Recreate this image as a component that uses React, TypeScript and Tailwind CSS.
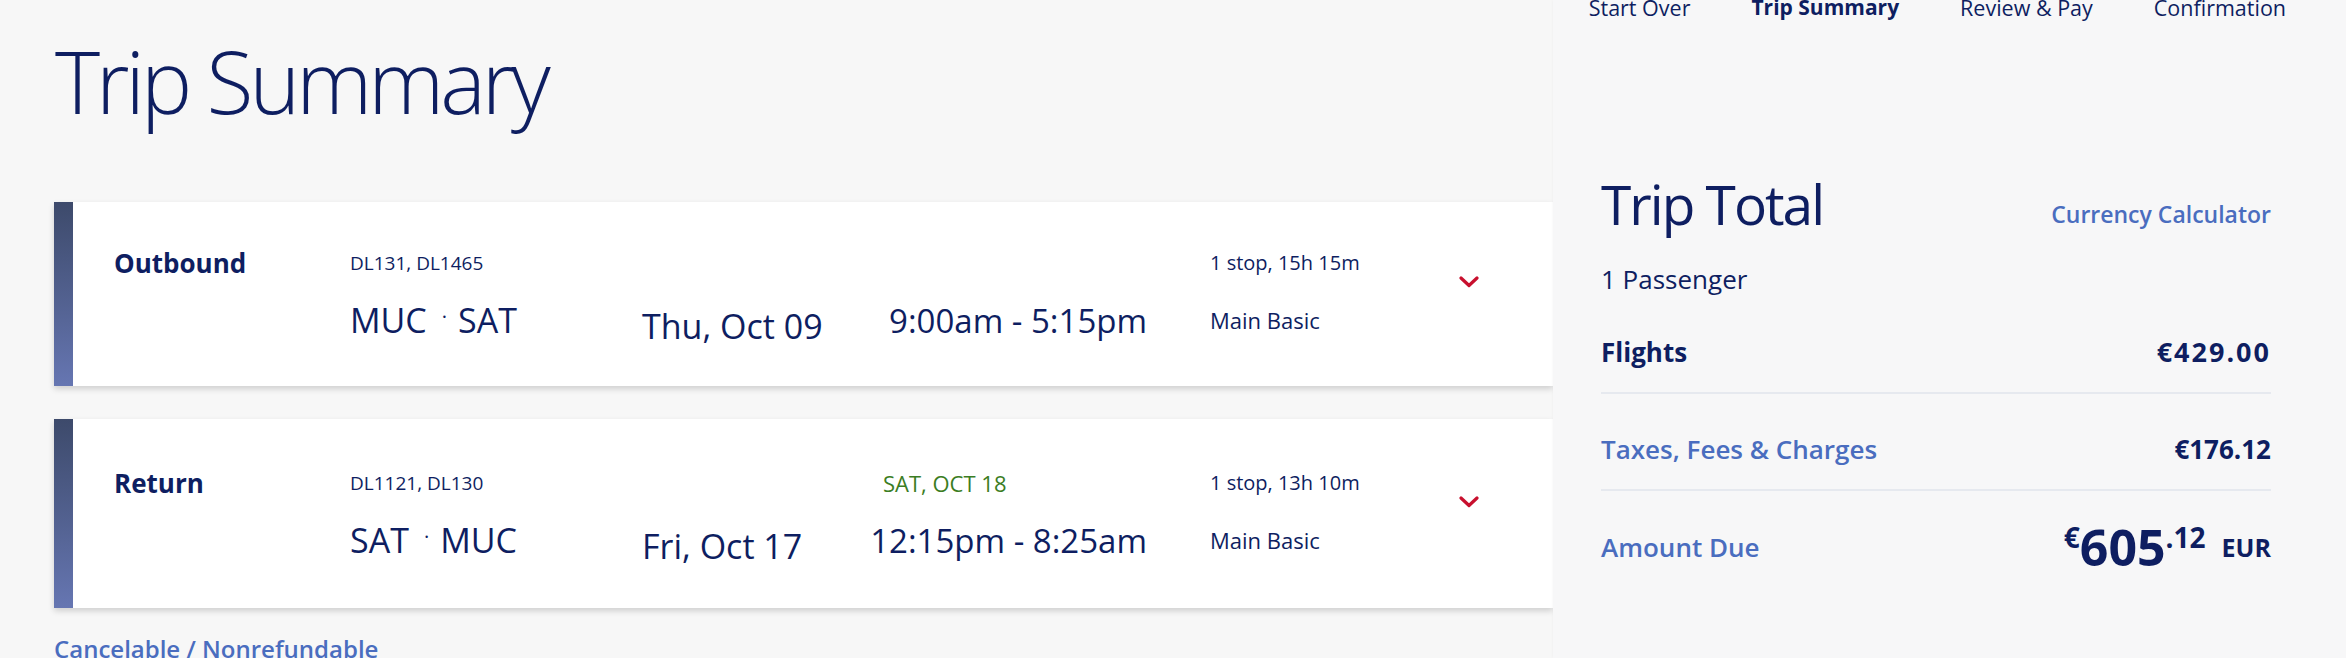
import React from 'react';

const flights = [
  {
    id: 'out',
    label: 'Outbound',
    numbers: 'DL131, DL1465',
    from: 'MUC',
    to: 'SAT',
    date: 'Thu, Oct 09',
    arrival: '',
    times: '9:00am - 5:15pm',
    stops: '1 stop, 15h 15m',
    fare: 'Main Basic',
  },
  {
    id: 'ret',
    label: 'Return',
    numbers: 'DL1121, DL130',
    from: 'SAT',
    to: 'MUC',
    date: 'Fri, Oct 17',
    arrival: 'SAT, OCT 18',
    times: '12:15pm - 8:25am',
    stops: '1 stop, 13h 10m',
    fare: 'Main Basic',
  },
];

const Chevron = () => (
  <svg width="20" height="12" viewBox="0 0 20 12" fill="none">
    <path d="M2 2 L10 9.5 L18 2" stroke="#c8102e" strokeWidth="3.2" strokeLinecap="round" strokeLinejoin="round" />
  </svg>
);

const FlightCard = ({ f }: { f: (typeof flights)[number] }) => (
  <div className="flex bg-white shadow-[0_3px_6px_rgba(0,0,0,0.16)]">
    <div className="w-[19px] shrink-0 bg-gradient-to-b from-[#3d4a6b] to-[#6676b2]" />
    <div className={`flex-1 pl-[41px] ${f.arrival ? 'pt-[51px] pb-[50px]' : 'py-[48px]'}`}>
      <div className="grid grid-cols-[236px_292px_241px_264px_312px_auto] grid-rows-[26px_36px] gap-y-[26px] items-center whitespace-nowrap">
        <div className="text-[26px] leading-none font-bold">{f.label}</div>
        <div className="text-[19px] leading-none">{f.numbers}</div>
        <div />
        <div className="text-[22px] leading-none text-[#3b7d23] uppercase">{f.arrival}</div>
        <div className="pl-[63px] text-[20px] leading-none">{f.stops}</div>
        <div className="row-span-2 self-start pt-[26px]">
          <Chevron />
        </div>
        <div />
        <div className="text-[34px] leading-none flex items-center">
          <span>{f.from}</span>
          <span className="text-[20px] ml-[15px] mr-[11px] -mt-[6px]">·</span>
          <span>{f.to}</span>
        </div>
        <div className="text-[34px] leading-none pt-[12px]">{f.date}</div>
        <div className="text-[33px] leading-none font-medium justify-self-end">{f.times}</div>
        <div className="pl-[63px] text-[22px] leading-none">{f.fare}</div>
      </div>
    </div>
  </div>
);

export default function App() {
  return (
    <div
      className="flex h-[658px] overflow-hidden bg-[#f7f7f7] text-[#0e1e61] [font-stretch:90%]"
      style={{ fontFamily: '"Open Sans", "Liberation Sans", sans-serif' }}
    >
      <main className="w-[1553px] shrink-0 pl-[54px]">
        <h1 className="pl-[1px] pt-[38px] text-[86px] leading-none font-light tracking-[-4px]">Trip Summary</h1>
        <div className="mt-[78px] flex flex-col gap-[33px]">
          {flights.map((f) => (
            <FlightCard key={f.id} f={f} />
          ))}
        </div>
        <div className="mt-[29px] text-[24px] leading-none font-semibold text-[#4a6dbf]">
          Cancelable / Nonrefundable
        </div>
      </main>

      <aside className="flex-1 bg-[#f7f7f8] shadow-[-1px_0_2px_rgba(0,0,0,0.025)]">
        <nav className="flex justify-end gap-[61px] pr-[60px] h-[22px] -mt-[3px] text-[21.5px] leading-none">
          <span>Start Over</span>
          <span className="font-bold text-[21px]">Trip Summary</span>
          <span>Review &amp; Pay</span>
          <span>Confirmation</span>
        </nav>

        <div className="pl-[48px] pr-[75px] mt-[157px]">
          <div className="flex justify-between items-start">
            <h2 className="text-[55px] leading-none font-medium tracking-[-2px]">Trip Total</h2>
            <button className="mt-[27px] text-[23px] leading-none font-semibold text-[#4a6dbf]">Currency Calculator</button>
          </div>
          <div className="mt-[35px] text-[26px] leading-none">1 Passenger</div>
          <div className="mt-[46px] flex justify-between items-center leading-none font-bold">
            <span className="text-[26px]">Flights</span>
            <span className="text-[27px] tracking-[2px]">€429.00</span>
          </div>
          <div className="mt-[27px] h-[2px] bg-[#e6e9ef]" />
          <div className="mt-[42px] flex justify-between items-center leading-none">
            <span className="text-[26px] font-semibold text-[#4a6dbf]">Taxes, Fees &amp; Charges</span>
            <span className="text-[26px] font-bold">€176.12</span>
          </div>
          <div className="mt-[27px] h-[2px] bg-[#e6e9ef]" />
          <div className="mt-[31px] flex justify-between items-center">
            <span className="text-[26px] leading-none font-semibold text-[#4a6dbf]">Amount Due</span>
            <div className="flex items-start font-bold leading-none">
              <span className="text-[28px] mt-[1px]">€</span>
              <span className="text-[50px]">605</span>
              <span className="text-[28px] mt-[1px]">.12</span>
              <span className="text-[25px] ml-[16px] self-center">EUR</span>
            </div>
          </div>
        </div>
      </aside>
    </div>
  );
}
